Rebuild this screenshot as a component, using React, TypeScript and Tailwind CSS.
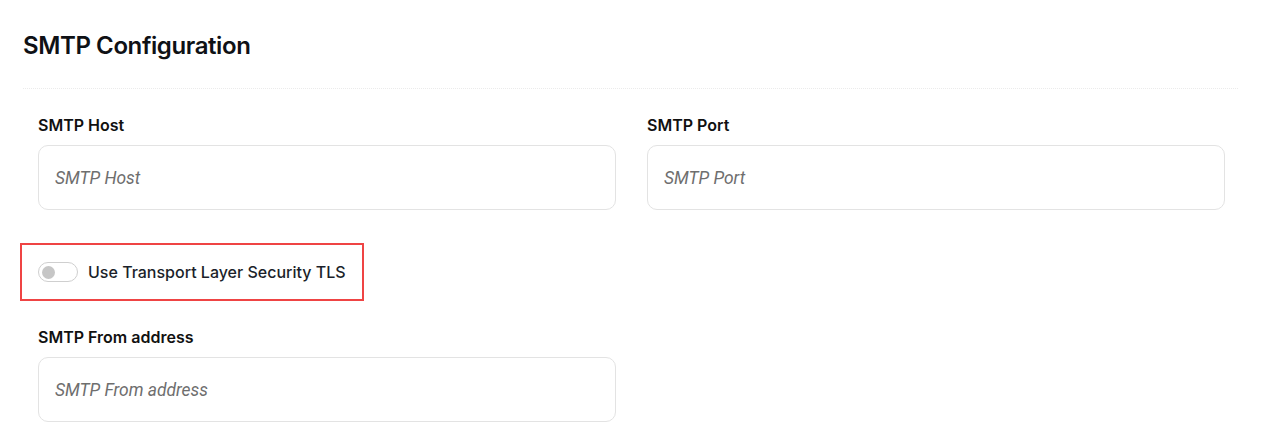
import React from "react";

const inter = { fontFamily: "Inter, 'Noto Sans', sans-serif" };

function Field({ label, placeholder }: { label: string; placeholder: string }) {
  return (
    <div className="flex flex-col">
      <label className="text-[16px] leading-6 font-semibold text-[#111111]">{label}</label>
      <input
        placeholder={placeholder}
        className="mt-2 h-[65px] w-full rounded-[10px] border border-[#e3e3e3] bg-white px-4 text-[17.4px] italic text-gray-700 placeholder:text-[#6e6e6e] outline-none font-['Roboto',sans-serif]"
      />
    </div>
  );
}

export default function App() {
  return (
    <div className="min-h-[436px] w-full bg-white" style={inter}>
      <div className="pl-[23px] pr-[26px] pt-[30px]">
        <h1 className="text-[24px] leading-8 font-semibold text-[#0f1115] tracking-[-0.4px]">SMTP Configuration</h1>
        <div className="mt-[26px] border-t border-dotted border-[#ebebeb]" />
      </div>
      <div className="pl-[38px] pr-[39px] pt-[24px]">
        <div className="grid grid-cols-2 gap-x-[31px]">
          <Field label="SMTP Host" placeholder="SMTP Host" />
          <Field label="SMTP Port" placeholder="SMTP Port" />
        </div>
        <div className="mt-[33px] -ml-[18px] flex">
          <div className="flex h-[58px] items-center gap-[10px] border-2 border-[#ef4444] pl-4 pr-4">
            <span className="relative inline-flex h-5 w-10 items-center rounded-full border border-[#cfcfcf] bg-white">
              <span className="ml-[3px] h-[13px] w-[13px] rounded-full bg-[#c6c6c6]" />
            </span>
            <span className="text-[16px] leading-6 font-medium text-[#1b1f2a]">Use Transport Layer Security TLS</span>
          </div>
        </div>
        <div className="mt-[24px] grid grid-cols-2 gap-x-[31px]">
          <Field label="SMTP From address" placeholder="SMTP From address" />
        </div>
      </div>
    </div>
  );
}
